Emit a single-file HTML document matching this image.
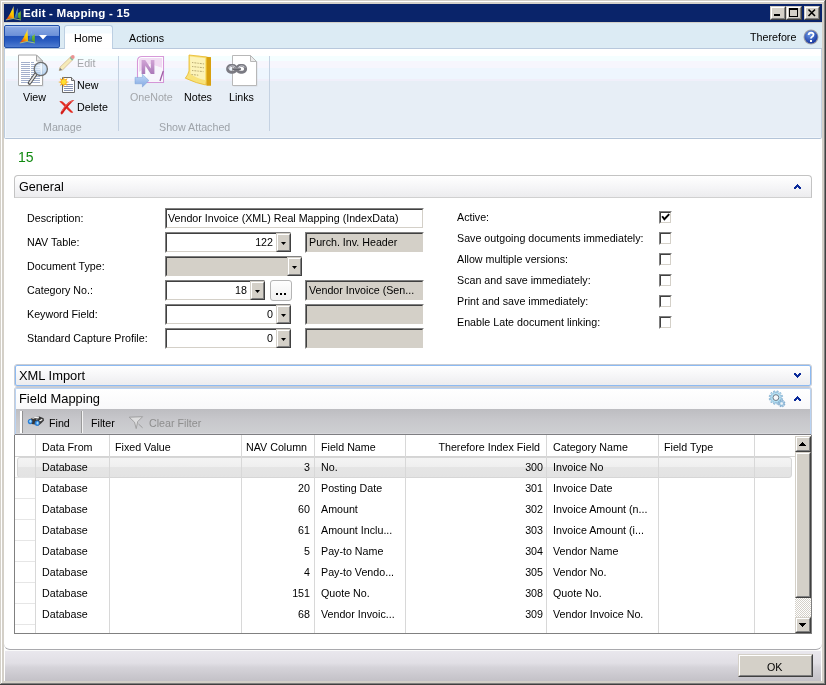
<!DOCTYPE html>
<html><head><meta charset="utf-8">
<style>
*{box-sizing:border-box}
html,body{margin:0;padding:0}
body{will-change:transform;width:826px;height:685px;overflow:hidden;position:relative;background:#d4d0c8;font-family:"Liberation Sans",sans-serif;}
.a{position:absolute}
.t{position:absolute;font-size:10.7px;line-height:13px;white-space:nowrap;color:#000}
.r{text-align:right}
.g{color:#8d8d8d}
.sunk{position:absolute;background:#fff;border-top:1px solid #808080;border-left:1px solid #808080;border-bottom:1px solid #fff;border-right:1px solid #fff}
.sunk>i{position:absolute;left:0;top:0;right:0;bottom:0;border-top:1px solid #404040;border-left:1px solid #404040;border-bottom:1px solid #d4d0c8;border-right:1px solid #d4d0c8}
.gray{background:#d4d0c8}
.ddb{position:absolute;background:#d4d0c8;border-top:1px solid #d4d0c8;border-left:1px solid #d4d0c8;border-bottom:1px solid #404040;border-right:1px solid #404040}
.ddb>i{position:absolute;left:0;top:0;right:0;bottom:0;border-top:1px solid #fff;border-left:1px solid #fff;border-bottom:1px solid #808080;border-right:1px solid #808080}
.ddb>b{position:absolute;left:4px;top:8px;width:5px;height:3px;background:#000;clip-path:polygon(0 0,100% 0,50% 100%)}
.cb{position:absolute;width:13px;height:13px;background:#fff;border-top:1px solid #808080;border-left:1px solid #808080;border-bottom:1px solid #fff;border-right:1px solid #fff}
.cb>i{position:absolute;left:0;top:0;right:0;bottom:0;border-top:1px solid #404040;border-left:1px solid #404040;border-bottom:1px solid #d4d0c8;border-right:1px solid #d4d0c8}
.vl{position:absolute;width:1px}
.hl{position:absolute;height:1px}
</style></head><body>
<svg width="0" height="0" style="position:absolute"><defs>
<linearGradient id="ly" x1="0" y1="1" x2="0.5" y2="0"><stop offset="0" stop-color="#d82818"/><stop offset="0.3" stop-color="#f06a10"/><stop offset="0.55" stop-color="#fcb800"/><stop offset="0.8" stop-color="#fcd800"/><stop offset="1" stop-color="#e8d070"/></linearGradient>
<linearGradient id="lb" x1="0" y1="1" x2="0" y2="0"><stop offset="0" stop-color="#2f7080"/><stop offset="0.5" stop-color="#3a8ad8"/><stop offset="1" stop-color="#a8c8f0"/></linearGradient>
<linearGradient id="lg" x1="0" y1="1" x2="0" y2="0"><stop offset="0" stop-color="#4aa018"/><stop offset="1" stop-color="#80c040"/></linearGradient>
<symbol id="dyn" viewBox="0 0 17 16">
<path d="M0.8 15 Q5 10 8.6 1 L9 13.3 Q5 13.6 0.8 15Z" fill="url(#ly)"/>
<path d="M9.2 13 Q11 8 12.5 3 L12.8 13Z" fill="url(#lb)"/>
<path d="M13.1 12.8 L13.1 8 Q14.8 7.3 15.8 6 L15.8 15 Q14.5 13.4 13.1 12.8Z" fill="url(#lg)"/>
<path d="M0.8 15 Q8 12 15.8 15" stroke="#b8d878" stroke-width="1" fill="none" opacity="0.8"/>
</symbol></defs></svg>
<!-- frame -->
<div class="a" style="left:1px;top:1px;width:823px;height:1px;background:#fff"></div>
<div class="a" style="left:1px;top:1px;width:1px;height:682px;background:#fff"></div>
<div class="a" style="left:0;top:684px;width:826px;height:1px;background:#404040"></div>
<div class="a" style="left:1px;top:683px;width:824px;height:1px;background:#808080"></div>
<div class="a" style="left:825px;top:0;width:1px;height:685px;background:#404040"></div>
<div class="a" style="left:824px;top:1px;width:1px;height:683px;background:#808080"></div>

<!-- title bar -->
<div class="a" style="left:4px;top:4px;width:818px;height:18px;background:#0a246a"></div>
<svg class="a" style="left:5px;top:5px" width="17" height="16"><use href="#dyn"/></svg>
<div class="t" style="left:23px;top:6px;color:#fff;font-weight:bold;font-size:11.6px;letter-spacing:0.2px">Edit - Mapping - 15</div>

<!-- content -->
<div class="a" style="left:4px;top:23px;width:818px;height:658px;background:#fff"></div>

<!-- title buttons -->
<div class="ddb" style="left:770px;top:6px;width:16px;height:14px"><i></i><div class="a" style="left:3px;top:7px;width:6px;height:2px;background:#000"></div></div>
<div class="ddb" style="left:786px;top:6px;width:16px;height:14px"><i></i><div class="a" style="left:2px;top:1px;width:9px;height:9px;border:1px solid #000;border-top-width:2px"></div></div>
<div class="ddb" style="left:804px;top:6px;width:16px;height:14px"><i></i><svg class="a" style="left:-1px;top:-1px" width="16" height="14"><path d="M4.5 3.5L11 10M11 3.5L4.5 10" stroke="#000" stroke-width="1.6"/></svg></div>

<!-- tab bar -->
<div class="a" style="left:4px;top:23px;width:818px;height:25px;background:#dcebf4"></div>

<!-- app button -->
<div class="a" style="left:4px;top:25px;width:56px;height:23px;border:1px solid #1e4da8;border-radius:2px;background:linear-gradient(#c3d3f2 0%,#86a6e2 8%,#6d91d8 45%,#2152ba 50%,#2a5cc0 70%,#4d7bd0 100%)"></div>
<svg class="a" style="left:19px;top:28px" width="17" height="16"><use href="#dyn"/></svg>
<svg class="a" style="left:39px;top:35px" width="8" height="5"><path d="M0 0H8L4 4.5Z" fill="#fff"/></svg>

<!-- tabs -->
<div class="a" style="left:4px;top:48px;width:818px;height:1px;background:#b8c8dc"></div>
<div class="a" style="left:64px;top:25px;width:49px;height:24px;border:1px solid #bccfe2;border-bottom:none;border-radius:3px 3px 0 0;background:linear-gradient(#f3fafe 0px,#f3fafe 7px,#ffffff 8px)"></div>
<div class="t" style="left:74px;top:32px">Home</div>
<div class="t" style="left:129px;top:32px">Actions</div>
<div class="t" style="left:750px;top:31px">Therefore</div>
<svg class="a" style="left:803px;top:29px" width="16" height="16" viewBox="0 0 16 16">
<defs><radialGradient id="hb" cx="0.4" cy="0.3" r="0.7"><stop offset="0" stop-color="#6f9ce8"/><stop offset="1" stop-color="#1636a0"/></radialGradient></defs>
<circle cx="8" cy="8" r="7.5" fill="#a0a0a8"/><circle cx="8" cy="8" r="6.5" fill="url(#hb)"/>
<path d="M5.6 6 Q5.8 3.6 8.2 3.6 Q10.6 3.8 10.5 5.8 Q10.4 7.2 8.8 8 Q8 8.5 8 9.6" stroke="#fff" stroke-width="1.8" fill="none"/>
<rect x="7" y="11" width="2" height="2" fill="#fff"/>
</svg>

<!-- ribbon -->
<div class="a" style="left:4px;top:49px;width:818px;height:89px;background:linear-gradient(#ffffff 0px,#ffffff 7px,#f4feff 7px,#f4feff 12px,#f7f6fd 12px,#f7f6fd 19px,#eef6fe 19px,#eef6fe 30px,#f0effa 30px,#f0effa 32px,#e7eef6 32px,#e7eef6 88px,#eef4fa 88px)"></div>
<div class="a" style="left:65px;top:48px;width:47px;height:1px;background:#fdfeff"></div>
<div class="a" style="left:4px;top:49px;width:818px;height:90px;border-left:1px solid #bccde0;border-right:1px solid #c4d2e2;border-bottom:1px solid #b4c4d8;border-radius:0 0 2px 2px"></div>
<div class="a" style="left:5px;top:49px;width:1px;height:89px;background:linear-gradient(rgba(255,255,255,0.9),rgba(244,248,252,0.8))"></div>
<div class="vl" style="left:118px;top:56px;height:75px;background:#c5d2e2"></div>
<div class="vl" style="left:269px;top:56px;height:75px;background:#c5d2e2"></div>
<div class="t" style="left:23px;top:91px">View</div>
<div class="t g" style="left:77px;top:57px;color:#a3a6aa">Edit</div>
<div class="t" style="left:77px;top:79px">New</div>
<div class="t" style="left:77px;top:101px">Delete</div>
<div class="t g" style="left:43px;top:121px;color:#9ea3a9">Manage</div>
<div class="t g" style="left:130px;top:91px;color:#a3a6aa">OneNote</div>
<div class="t" style="left:184px;top:91px">Notes</div>
<div class="t" style="left:229px;top:91px">Links</div>
<div class="t g" style="left:159px;top:121px;color:#9ea3a9">Show Attached</div>


<!-- ribbon icons -->
<svg class="a" style="left:16px;top:53px" width="36" height="36" viewBox="16 53 36 36">
<defs><radialGradient id="mg" cx="0.4" cy="0.35" r="0.7"><stop offset="0" stop-color="#f4f9ff"/><stop offset="1" stop-color="#9cc4ec"/></radialGradient></defs>
<path d="M19.5 86.5H43.5V62L37.5 56H19.5Z" fill="#c8ccd4" opacity="0.6"/>
<path d="M18.5 85.5H42.5V61L36.5 55H18.5Z" fill="#fff" stroke="#a8a8a8" stroke-width="1"/>
<path d="M36.5 55V61H42.5Z" fill="#e8e8e8" stroke="#a8a8a8" stroke-width="1" stroke-linejoin="round"/>
<g stroke="#a4b0cc" stroke-width="1">
<path d="M21 62.5H30M31 62.5H34M21 64.5H30M31 64.5H40M21 66.5H30M31 66.5H40M21 68.5H30M31 68.5H40M21 70.5H30M31 70.5H40M21 72.5H30M31 72.5H40M21 74.5H30M31 74.5H40M21 76.5H30M31 76.5H40M21 78.5H30M31 78.5H40M21 80.5H30M31 80.5H40M21 82.5H30M31 82.5H40"/>
</g>
<path d="M35.5 74.5L29.5 83" stroke="#505050" stroke-width="3.6" stroke-linecap="round"/>
<path d="M35.3 74.7L29.7 82.7" stroke="#e8e8e8" stroke-width="1.6" stroke-linecap="round"/>
<circle cx="40.8" cy="69" r="6.6" fill="url(#mg)" fill-opacity="0.75" stroke="#6e6e6e" stroke-width="1.3"/><path d="M41.5 63.5V74" stroke="#fff" stroke-width="0.8" opacity="0.7"/>
</svg>

<svg class="a" style="left:56px;top:53px" width="22" height="22" viewBox="56 53 22 22" opacity="0.8">
<path d="M59.2 70.6L60 67.2L71 56.5L73.5 59L62.7 69.8Z" fill="#f6e8a8" stroke="#c8a878" stroke-width="0.8"/>
<path d="M59.2 70.6L60 67.8L62.2 70Z" fill="#606060"/>
<path d="M69.6 57.9L72.1 60.4L73.3 59.2L70.8 56.7Z" fill="#60b090"/>
<circle cx="72.8" cy="56.9" r="1.9" fill="#e87878"/>
</svg>

<svg class="a" style="left:56px;top:74px" width="22" height="22" viewBox="56 74 22 22">
<path d="M62.5 92.5H74.5V80.5L71.5 77.5H62.5Z" fill="#fff" stroke="#6a6a6a" stroke-width="1"/>
<path d="M71.5 77.5V80.5H74.5" fill="#e0e0e0" stroke="#6a6a6a" stroke-width="1"/>
<g stroke="#8894b4" stroke-width="1"><path d="M64 84.5H73M64 86.5H73M64 88.5H73M64 90.5H73"/></g>
<g fill="#f8a818"><path d="M63.7 76.5L64.6 79.6L67.6 78.2L66.2 81.2L69.3 82L66.2 82.9L67.6 85.8L64.6 84.4L63.7 87.5L62.8 84.4L59.8 85.8L61.2 82.9L58.1 82L61.2 81.2L59.8 78.2L62.8 79.6Z"/></g>
<circle cx="63.7" cy="82" r="2.4" fill="#ffe030"/>
</svg>

<svg class="a" style="left:56px;top:96px" width="22" height="22" viewBox="56 96 22 22">
<path d="M59.3 101.4Q61.5 100 64.5 103.2Q68.5 107.5 73.2 112.2Q72.4 113.4 70.6 112.4Q66.5 109 63 105Q61 102.5 59.3 101.4Z" fill="#e42c22"/>
<path d="M74.3 100.1Q70.5 100.2 66.5 104.2Q62.8 108 60.6 112.6Q60.4 114.6 61.9 114.4Q63.6 113 65 110.6Q67.5 106.5 70.8 103.4Q72.6 101.6 74.3 100.1Z" fill="#d41e1a"/>
<path d="M73.6 100.5Q70 101.4 66.8 104.6Q64 107.4 62 111" stroke="#f26a60" stroke-width="0.9" fill="none"/>
</svg>

<svg class="a" style="left:132px;top:53px" width="36" height="36" viewBox="132 53 36 36" opacity="0.8">
<defs><linearGradient id="on" x1="0" y1="0" x2="0" y2="1"><stop offset="0" stop-color="#c890cc"/><stop offset="1" stop-color="#9a5aa8"/></linearGradient>
<linearGradient id="oa" x1="0" y1="0" x2="0" y2="1"><stop offset="0" stop-color="#b8d4f6"/><stop offset="1" stop-color="#6a98e0"/></linearGradient></defs>
<path d="M137.5 82.5V61Q137.5 56.5 142 56.5H163.5V82.5Z" fill="#fff" stroke="#d080d0" stroke-width="1.1"/>
<path d="M139 60.5Q139 58 141.5 58H162V68L150 64L139 72Z" fill="#f0d4f0"/>
<path d="M150 64L162 68V81.5H146Z" fill="#f8f6fc"/>
<path d="M141.6 74V60H145.2L150.8 68.5V60H154.4V74H150.8L145.2 65.5V74Z" fill="url(#on)"/>
<path d="M163.3 71L160 81" stroke="#8a3a90" stroke-width="1.3"/>
<path d="M135 77.4H142.4V74.2L148.9 80.6L142.4 87V83.8H135Z" fill="url(#oa)" stroke="#5a88cc" stroke-width="0.5"/>
</svg>

<svg class="a" style="left:182px;top:52px" width="32" height="36" viewBox="182 52 32 36">
<path d="M189 55L206.5 56.8L211 57.2V85.6L206.5 85.6L206 56.5Z" fill="#e0a818"/>
<path d="M206.5 57V85.6H211V57.5Z" fill="#d8a010"/>
<path d="M189 55L206.5 57L206.5 80Q206 84 205.7 85Q197 83.5 185.3 78.2Q188 75 189 71Z" fill="#f8e27a" stroke="#e8b828" stroke-width="0.8"/>
<path d="M190 56.5L205 58.2L205 80Q198 79 190.5 74Z" fill="#fdf6c4" opacity="0.85"/>
<g stroke="#9a8a50" stroke-width="0.8" stroke-dasharray="1.4 1 2 1" opacity="0.85"><path d="M192 62.5L204.5 64M192 66.5L204 67.8M192 70.5L203.5 71.6M191.5 74.5L198.5 75.2"/></g>
</svg>

<svg class="a" style="left:222px;top:52px" width="38" height="36" viewBox="222 52 38 36">
<path d="M233.5 86.5H257.5V62L251 56H233.5Z" fill="#c8ccd4" opacity="0.5"/>
<path d="M232.5 85.5H256.5V61.5L250.5 55.5H232.5Z" fill="#fff" stroke="#b8b8b8" stroke-width="1"/>
<path d="M250.5 55.5V61.5H256.5Z" fill="#ececec" stroke="#b8b8b8" stroke-width="1" stroke-linejoin="round"/>
<g fill="none" stroke="#7a7a82" stroke-width="3"><rect x="227.6" y="65.6" width="8.6" height="6.6" rx="3.3"/><rect x="237" y="65.6" width="8.6" height="6.6" rx="3.3"/></g>
<g fill="none" stroke="#d4d4dc" stroke-width="1"><path d="M228.4 68.5Q229 66.2 231.5 66H233Q235 66.2 235.6 67.5M237.8 68.5Q238.4 66.2 241 66H242.4Q244.4 66.2 245 67.5"/></g>
<path d="M232.5 69H240.8" stroke="#66666e" stroke-width="2.2"/>
<path d="M233 68.2H240" stroke="#a8a8b0" stroke-width="0.8"/>
</svg>

<!-- main white -->
<div class="a" style="left:4px;top:139px;width:818px;height:511px;background:#fff;border-bottom:1px solid #a9a9ad;border-radius:0 0 6px 6px"></div>
<div class="t" style="left:18px;top:151px;font-size:14px;color:#108a10">15</div>

<!-- General header -->
<div class="a" style="left:14px;top:175px;width:798px;height:23px;border:1px solid #c3c3c3;border-bottom-color:#d0d0d0;border-radius:4px 4px 0 0;background:linear-gradient(#ffffff,#f4f4f6 60%,#ececee)"></div>
<div class="t" style="left:19px;top:181px;font-size:12.6px">General</div>
<svg class="a" style="left:794px;top:184px" width="7" height="5" shape-rendering="crispEdges"><path d="M3 0h1v1h-1zM2 1h1v1h-1zM3 1h1v1h-1zM4 1h1v1h-1zM1 2h1v1h-1zM2 2h1v1h-1zM3 2h1v1h-1zM4 2h1v1h-1zM5 2h1v1h-1zM0 3h1v1h-1zM1 3h1v1h-1zM2 3h1v1h-1zM4 3h1v1h-1zM5 3h1v1h-1zM6 3h1v1h-1zM0 4h1v1h-1zM1 4h1v1h-1zM5 4h1v1h-1zM6 4h1v1h-1z" fill="#0a2a9a"/></svg>

<!-- form labels -->
<div class="t" style="left:27px;top:212px">Description:</div>
<div class="t" style="left:27px;top:236px">NAV Table:</div>
<div class="t" style="left:27px;top:260px">Document Type:</div>
<div class="t" style="left:27px;top:284px">Category No.:</div>
<div class="t" style="left:27px;top:308px">Keyword Field:</div>
<div class="t" style="left:27px;top:332px">Standard Capture Profile:</div>

<!-- inputs -->
<div class="sunk" style="left:165px;top:208px;width:259px;height:21px"><i></i><div class="t" style="left:2px;top:3px">Vendor Invoice (XML) Real Mapping (IndexData)</div></div>
<div class="sunk" style="left:165px;top:232px;width:126px;height:21px"><i></i><div class="t r" style="right:17px;top:3px">122</div><div class="ddb" style="left:110px;top:0px;width:15px;height:19px"><i></i><b></b></div></div>
<div class="sunk gray" style="left:305px;top:232px;width:119px;height:21px"><i></i><div class="t" style="left:3px;top:3px">Purch. Inv. Header</div></div>
<div class="sunk gray" style="left:165px;top:256px;width:137px;height:21px"><i></i><div class="ddb" style="left:121px;top:0px;width:15px;height:19px"><i></i><b></b></div></div>
<div class="sunk" style="left:165px;top:280px;width:100px;height:21px"><i></i><div class="t r" style="right:17px;top:3px">18</div><div class="ddb" style="left:84px;top:0px;width:15px;height:19px"><i></i><b></b></div></div>
<div class="a" style="left:270px;top:280px;width:22px;height:21px;border:1px solid #b4b4b4;border-radius:3px;background:linear-gradient(#fefefe,#f0f0f0)"></div>
<div class="a" style="left:276px;top:293px;width:2px;height:2px;background:#000"></div><div class="a" style="left:280px;top:293px;width:2px;height:2px;background:#000"></div><div class="a" style="left:284px;top:293px;width:2px;height:2px;background:#000"></div>
<div class="sunk gray" style="left:305px;top:280px;width:119px;height:21px"><i></i><div class="t" style="left:3px;top:3px">Vendor Invoice (Sen...</div></div>
<div class="sunk" style="left:165px;top:304px;width:126px;height:21px"><i></i><div class="t r" style="right:17px;top:3px">0</div><div class="ddb" style="left:110px;top:0px;width:15px;height:19px"><i></i><b></b></div></div>
<div class="sunk gray" style="left:305px;top:304px;width:119px;height:21px"><i></i></div>
<div class="sunk" style="left:165px;top:328px;width:126px;height:21px"><i></i><div class="t r" style="right:17px;top:3px">0</div><div class="ddb" style="left:110px;top:0px;width:15px;height:19px"><i></i><b></b></div></div>
<div class="sunk gray" style="left:305px;top:328px;width:119px;height:21px"><i></i></div>

<!-- checkboxes -->
<div class="t" style="left:457px;top:211px">Active:</div>
<div class="t" style="left:457px;top:232px">Save outgoing documents immediately:</div>
<div class="t" style="left:457px;top:253px">Allow multiple versions:</div>
<div class="t" style="left:457px;top:274px">Scan and save immediately:</div>
<div class="t" style="left:457px;top:295px">Print and save immediately:</div>
<div class="t" style="left:457px;top:316px">Enable Late document linking:</div>
<div class="cb" style="left:659px;top:211px"><i></i><svg class="a" style="left:1px;top:1px" width="10" height="10"><path d="M1.2 3.2L3.4 6.2L8.2 1.2" stroke="#000" stroke-width="1.9" fill="none"/></svg></div>
<div class="cb" style="left:659px;top:232px"><i></i></div>
<div class="cb" style="left:659px;top:253px"><i></i></div>
<div class="cb" style="left:659px;top:274px"><i></i></div>
<div class="cb" style="left:659px;top:295px"><i></i></div>
<div class="cb" style="left:659px;top:316px"><i></i></div>

<!-- XML Import -->
<div class="a" style="left:14px;top:364px;width:798px;height:23px;border:1px solid #c8ccd4;border-radius:3px;background:#fff"></div>
<div class="a" style="left:15px;top:365px;width:796px;height:21px;border:1px solid #8cbaf2;border-radius:2px;background:linear-gradient(#ffffff,#f4f4f6 60%,#ececee)"></div>
<div class="t" style="left:19px;top:369px;font-size:12.9px">XML Import</div>
<svg class="a" style="left:794px;top:373px" width="7" height="5" shape-rendering="crispEdges"><path d="M0 0h1v1h-1zM1 0h1v1h-1zM5 0h1v1h-1zM6 0h1v1h-1zM0 1h1v1h-1zM1 1h1v1h-1zM2 1h1v1h-1zM4 1h1v1h-1zM5 1h1v1h-1zM6 1h1v1h-1zM1 2h1v1h-1zM2 2h1v1h-1zM3 2h1v1h-1zM4 2h1v1h-1zM5 2h1v1h-1zM2 3h1v1h-1zM3 3h1v1h-1zM4 3h1v1h-1zM3 4h1v1h-1z" fill="#0a2a9a"/></svg>

<!-- Field Mapping -->
<div class="a" style="left:14px;top:387px;width:798px;height:48px;border:1px solid #c8ccd4;border-bottom:none;border-radius:3px 3px 0 0;background:#fff"></div>
<div class="a" style="left:15px;top:388px;width:796px;height:47px;border:1px solid #b9d3f3;border-bottom:none;border-radius:2px 2px 0 0;background:linear-gradient(#ffffff,#f6f6f8 60%,#eeeef0)"></div>
<div class="t" style="left:19px;top:392px;font-size:12.9px">Field Mapping</div>
<svg class="a" style="left:794px;top:396px" width="7" height="5" shape-rendering="crispEdges"><path d="M3 0h1v1h-1zM2 1h1v1h-1zM3 1h1v1h-1zM4 1h1v1h-1zM1 2h1v1h-1zM2 2h1v1h-1zM3 2h1v1h-1zM4 2h1v1h-1zM5 2h1v1h-1zM0 3h1v1h-1zM1 3h1v1h-1zM2 3h1v1h-1zM4 3h1v1h-1zM5 3h1v1h-1zM6 3h1v1h-1zM0 4h1v1h-1zM1 4h1v1h-1zM5 4h1v1h-1zM6 4h1v1h-1z" fill="#0a2a9a"/></svg>
<svg class="a" style="left:766px;top:388px" width="22" height="21" viewBox="766 388 22 21">
<path d="M780.90 397.60 L780.86 398.25 L782.62 398.63 L782.24 400.07 L780.52 399.51 L780.23 400.10 L779.87 400.64 L781.21 401.85 L780.15 402.91 L778.94 401.57 L778.40 401.93 L777.81 402.22 L778.37 403.94 L776.93 404.32 L776.55 402.56 L775.90 402.60 L775.25 402.56 L774.87 404.32 L773.43 403.94 L773.99 402.22 L773.40 401.93 L772.86 401.57 L771.65 402.91 L770.59 401.85 L771.93 400.64 L771.57 400.10 L771.28 399.51 L769.56 400.07 L769.18 398.63 L770.94 398.25 L770.90 397.60 L770.94 396.95 L769.18 396.57 L769.56 395.13 L771.28 395.69 L771.57 395.10 L771.93 394.56 L770.59 393.35 L771.65 392.29 L772.86 393.63 L773.40 393.27 L773.99 392.98 L773.43 391.26 L774.87 390.88 L775.25 392.64 L775.90 392.60 L776.55 392.64 L776.93 390.88 L778.37 391.26 L777.81 392.98 L778.40 393.27 L778.94 393.63 L780.15 392.29 L781.21 393.35 L779.87 394.56 L780.23 395.10 L780.52 395.69 L782.24 395.13 L782.62 396.57 L780.86 396.95Z" fill="#b6e2f4" stroke="#7aa8cc" stroke-width="0.7"/>
<circle cx="775.9" cy="397.6" r="2.9" fill="#f6f8fa" stroke="#6e7a88" stroke-width="1"/>
<path d="M784.10 403.50 L784.05 403.97 L785.01 404.27 L784.58 405.30 L783.70 404.83 L783.40 405.20 L783.03 405.50 L783.50 406.38 L782.47 406.81 L782.17 405.85 L781.70 405.90 L781.23 405.85 L780.93 406.81 L779.90 406.38 L780.37 405.50 L780.00 405.20 L779.70 404.83 L778.82 405.30 L778.39 404.27 L779.35 403.97 L779.30 403.50 L779.35 403.03 L778.39 402.73 L778.82 401.70 L779.70 402.17 L780.00 401.80 L780.37 401.50 L779.90 400.62 L780.93 400.19 L781.23 401.15 L781.70 401.10 L782.17 401.15 L782.47 400.19 L783.50 400.62 L783.03 401.50 L783.40 401.80 L783.70 402.17 L784.58 401.70 L785.01 402.73 L784.05 403.03Z" fill="#a4cce6" stroke="#6c9ac2" stroke-width="0.6"/>
<circle cx="781.7" cy="403.5" r="1.2" fill="#f0f4f8"/>
</svg>

<!-- toolbar -->
<div class="a" style="left:15px;top:409px;width:796px;height:26px;background:linear-gradient(#bdbdc1,#c7c7cb 40%,#cecfd2 92%,#d8d8dc 92%);border-left:1px solid #b9d3f3;border-right:1px solid #b9d3f3"></div>
<div class="a" style="left:15px;top:434px;width:796px;height:1px;background:#7e7e82"></div>
<div class="a" style="left:20px;top:411px;width:2px;height:22px;background:#fff"></div>
<div class="a" style="left:22px;top:411px;width:1px;height:22px;background:#909090"></div>
<div class="t" style="left:49px;top:417px">Find</div>
<div class="a" style="left:81px;top:411px;width:1px;height:22px;background:#9a9a9a"></div>
<div class="a" style="left:82px;top:411px;width:1px;height:22px;background:#f4f4f4"></div>
<div class="t" style="left:91px;top:417px">Filter</div>
<div class="t" style="left:149px;top:417px;color:#8e8e8e">Clear Filter</div>

<!-- toolbar icons -->
<svg class="a" style="left:26px;top:414px" width="20" height="14" viewBox="26 414 20 14">
<path d="M29 419.5L34 417.2L39.5 416.6L43.6 418.2L44 420.5L41 423.5L38.5 425.6L35 424.5L31.5 424L28.5 422Z" fill="#383838"/>
<path d="M32.5 418.6L35 417.6L39 417.3" stroke="#f4f4f4" stroke-width="1.1" fill="none"/>
<path d="M39.5 421L42.3 419.3" stroke="#f8f8f8" stroke-width="1.4"/>
<path d="M36 419.2L38.5 418.6" stroke="#c8c8c8" stroke-width="0.9"/>
<ellipse cx="30.1" cy="421.6" rx="2.3" ry="2.7" fill="#2a7ed6"/>
<ellipse cx="37.1" cy="423.3" rx="2.4" ry="2.7" fill="#2a7ed6"/>
<ellipse cx="30.4" cy="421.2" rx="1.1" ry="1.5" fill="#9edcff"/>
<ellipse cx="37.5" cy="422.9" rx="1.1" ry="1.5" fill="#9edcff"/>
</svg>
<svg class="a" style="left:127px;top:414px" width="18" height="16" viewBox="127 414 18 16" opacity="0.8">
<path d="M129.2 417.2L142.6 416.7L137.7 421.6L136.2 428.6L134.5 422.2Z" fill="#e4e4e4" stroke="#909090" stroke-width="0.9"/>
<path d="M138.5 424L142.6 427.8" stroke="#909090" stroke-width="1"/>
</svg>

<!-- grid -->
<div class="a" style="left:14px;top:435px;width:798px;height:199px;background:#fff;border:1px solid #808080;border-top:none"></div>
<div class="a" style="left:17px;top:457px;width:775px;height:21px;border:1px solid #d6d6d6;border-radius:3px;background:linear-gradient(#f4f4f4 0%,#efefef 45%,#e5e5e5 50%,#e3e3e3 100%)"></div>
<div class="hl" style="left:15px;top:456px;width:780px;background:#d4d4d4"></div>
<div class="hl" style="left:15px;top:477px;width:20px;background:#e6e6e6"></div>
<div class="hl" style="left:15px;top:498px;width:20px;background:#e6e6e6"></div>
<div class="hl" style="left:15px;top:519px;width:20px;background:#e6e6e6"></div>
<div class="hl" style="left:15px;top:540px;width:20px;background:#e6e6e6"></div>
<div class="hl" style="left:15px;top:561px;width:20px;background:#e6e6e6"></div>
<div class="hl" style="left:15px;top:582px;width:20px;background:#e6e6e6"></div>
<div class="hl" style="left:15px;top:603px;width:20px;background:#e6e6e6"></div>
<div class="hl" style="left:15px;top:624px;width:20px;background:#e6e6e6"></div>
<div class="vl" style="left:35px;top:435px;height:198px;background:#d8d8d8"></div>
<div class="vl" style="left:109px;top:435px;height:198px;background:#d8d8d8"></div>
<div class="vl" style="left:241px;top:435px;height:198px;background:#d8d8d8"></div>
<div class="vl" style="left:314px;top:435px;height:198px;background:#d8d8d8"></div>
<div class="vl" style="left:405px;top:435px;height:198px;background:#d8d8d8"></div>
<div class="vl" style="left:546px;top:435px;height:198px;background:#d8d8d8"></div>
<div class="vl" style="left:658px;top:435px;height:198px;background:#d8d8d8"></div>
<div class="vl" style="left:754px;top:435px;height:198px;background:#d8d8d8"></div>
<div class="t" style="left:42px;top:441px">Data From</div>
<div class="t" style="left:115px;top:441px">Fixed Value</div>
<div class="t r" style="left:200px;width:107px;top:441px">NAV Column</div>
<div class="t" style="left:321px;top:441px">Field Name</div>
<div class="t r" style="left:420px;width:120px;top:441px">Therefore Index Field</div>
<div class="t" style="left:553px;top:441px">Category Name</div>
<div class="t" style="left:664px;top:441px">Field Type</div>
<div class="t" style="left:42px;top:461px">Database</div>
<div class="t r" style="left:250px;width:60px;top:461px">3</div>
<div class="t" style="left:321px;top:461px">No.</div>
<div class="t r" style="left:483px;width:60px;top:461px">300</div>
<div class="t" style="left:553px;top:461px">Invoice No</div>
<div class="t" style="left:42px;top:482px">Database</div>
<div class="t r" style="left:250px;width:60px;top:482px">20</div>
<div class="t" style="left:321px;top:482px">Posting Date</div>
<div class="t r" style="left:483px;width:60px;top:482px">301</div>
<div class="t" style="left:553px;top:482px">Invoice Date</div>
<div class="t" style="left:42px;top:503px">Database</div>
<div class="t r" style="left:250px;width:60px;top:503px">60</div>
<div class="t" style="left:321px;top:503px">Amount</div>
<div class="t r" style="left:483px;width:60px;top:503px">302</div>
<div class="t" style="left:553px;top:503px">Invoice Amount (n...</div>
<div class="t" style="left:42px;top:524px">Database</div>
<div class="t r" style="left:250px;width:60px;top:524px">61</div>
<div class="t" style="left:321px;top:524px">Amount Inclu...</div>
<div class="t r" style="left:483px;width:60px;top:524px">303</div>
<div class="t" style="left:553px;top:524px">Invoice Amount (i...</div>
<div class="t" style="left:42px;top:545px">Database</div>
<div class="t r" style="left:250px;width:60px;top:545px">5</div>
<div class="t" style="left:321px;top:545px">Pay-to Name</div>
<div class="t r" style="left:483px;width:60px;top:545px">304</div>
<div class="t" style="left:553px;top:545px">Vendor Name</div>
<div class="t" style="left:42px;top:566px">Database</div>
<div class="t r" style="left:250px;width:60px;top:566px">4</div>
<div class="t" style="left:321px;top:566px">Pay-to Vendo...</div>
<div class="t r" style="left:483px;width:60px;top:566px">305</div>
<div class="t" style="left:553px;top:566px">Vendor No.</div>
<div class="t" style="left:42px;top:587px">Database</div>
<div class="t r" style="left:250px;width:60px;top:587px">151</div>
<div class="t" style="left:321px;top:587px">Quote No.</div>
<div class="t r" style="left:483px;width:60px;top:587px">308</div>
<div class="t" style="left:553px;top:587px">Quote No.</div>
<div class="t" style="left:42px;top:608px">Database</div>
<div class="t r" style="left:250px;width:60px;top:608px">68</div>
<div class="t" style="left:321px;top:608px">Vendor Invoic...</div>
<div class="t r" style="left:483px;width:60px;top:608px">309</div>
<div class="t" style="left:553px;top:608px">Vendor Invoice No.</div>
<div class="a" style="left:795px;top:436px;width:16px;height:197px;background-color:#fff;background-image:linear-gradient(45deg,#d4d0c8 25%,transparent 25%,transparent 75%,#d4d0c8 75%),linear-gradient(45deg,#d4d0c8 25%,transparent 25%,transparent 75%,#d4d0c8 75%);background-size:2px 2px;background-position:0 0,1px 1px"></div>
<div class="ddb" style="left:795px;top:436px;width:16px;height:16px"><i></i><svg class="a" style="left:3px;top:5px" width="7" height="4" shape-rendering="crispEdges"><path d="M3 0h1v1h1v1h1v1h1v1H0V3h1V2h1V1h1z" fill="#000"/></svg></div>
<div class="ddb" style="left:795px;top:452px;width:16px;height:146px"><i></i></div>
<div class="ddb" style="left:795px;top:617px;width:16px;height:16px"><i></i><svg class="a" style="left:3px;top:5px" width="7" height="4" shape-rendering="crispEdges"><path d="M0 0h7v1H6v1H5v1H4v1H3V3H2V2H1V1H0z" fill="#000"/></svg></div>
<div class="a" style="left:4px;top:650px;width:818px;height:31px;background:linear-gradient(#e9e7ed 0%,#e1dfe5 40%,#d5d3d9 55%,#c3c1c7 100%);border-top:1px solid #fafafa;border-left:1px solid #fff;border-right:1px solid #fff"></div>
<div class="ddb" style="left:738px;top:654px;width:75px;height:23px"><i></i></div>
<div class="t" style="left:767px;top:661px">OK</div>
</body></html>
